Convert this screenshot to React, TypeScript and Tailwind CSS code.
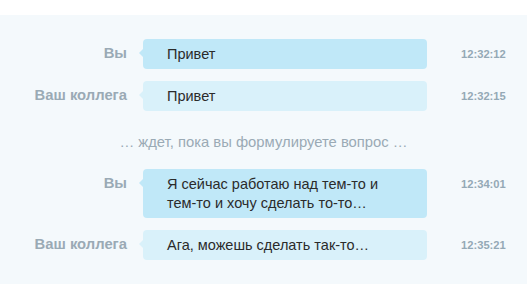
import React from "react";

type Msg = { who: string; mine: boolean; text: string; time: string };

const BEFORE: Msg[] = [
  { who: "Вы", mine: true, text: "Привет", time: "12:32:12" },
  { who: "Ваш коллега", mine: false, text: "Привет", time: "12:32:15" },
];

const AFTER: Msg[] = [
  {
    who: "Вы",
    mine: true,
    text: "Я сейчас работаю над тем-то и тем-то и хочу сделать то-то…",
    time: "12:34:01",
  },
  { who: "Ваш коллега", mine: false, text: "Ага, можешь сделать так-то…", time: "12:35:21" },
];

function Row({ m }: { m: Msg }) {
  const bg = m.mine ? "bg-[#c0e8f8]" : "bg-[#d9f1fa]";
  const arrow = m.mine ? "border-r-[#c0e8f8]" : "border-r-[#d9f1fa]";
  return (
    <div className="flex items-start">
      <div className="w-[127px] shrink-0 pt-[5px] text-right text-[14.8px] font-bold leading-[18px] text-[#9aaab5]">
        {m.who}
      </div>
      <div className="relative ml-4 w-[284px] shrink-0">
        <span
          className={`absolute left-[-4px] top-[10px] h-0 w-0 border-y-4 border-r-4 border-y-transparent ${arrow}`}
        />
        <div className={`rounded-[4px] ${bg} py-[5.5px] pl-6 pr-[40px] text-[14.5px] leading-[19px] text-[#2b2b2b]`}>
          {m.text}
        </div>
      </div>
      <div className="ml-[34px] pt-[6px] text-[11.2px] font-bold leading-[18px] text-[#94a9b6]">
        {m.time}
      </div>
    </div>
  );
}

export default function App() {
  return (
    <div className="h-[300px] w-[527px] bg-white pt-[15px]" style={{ fontFamily: "'Liberation Sans', Arial, sans-serif" }}>
      <div className="flex flex-col gap-3 bg-[#f4f9fc] pt-6 pb-6">
        {BEFORE.map((m) => (
          <Row key={m.time} m={m} />
        ))}
        <div className="flex h-[34px] items-center justify-center pt-1 text-[14.8px] text-[#9aaab5]">
          … ждет, пока вы формулируете вопрос …
        </div>
        {AFTER.map((m) => (
          <Row key={m.time} m={m} />
        ))}
      </div>
    </div>
  );
}
